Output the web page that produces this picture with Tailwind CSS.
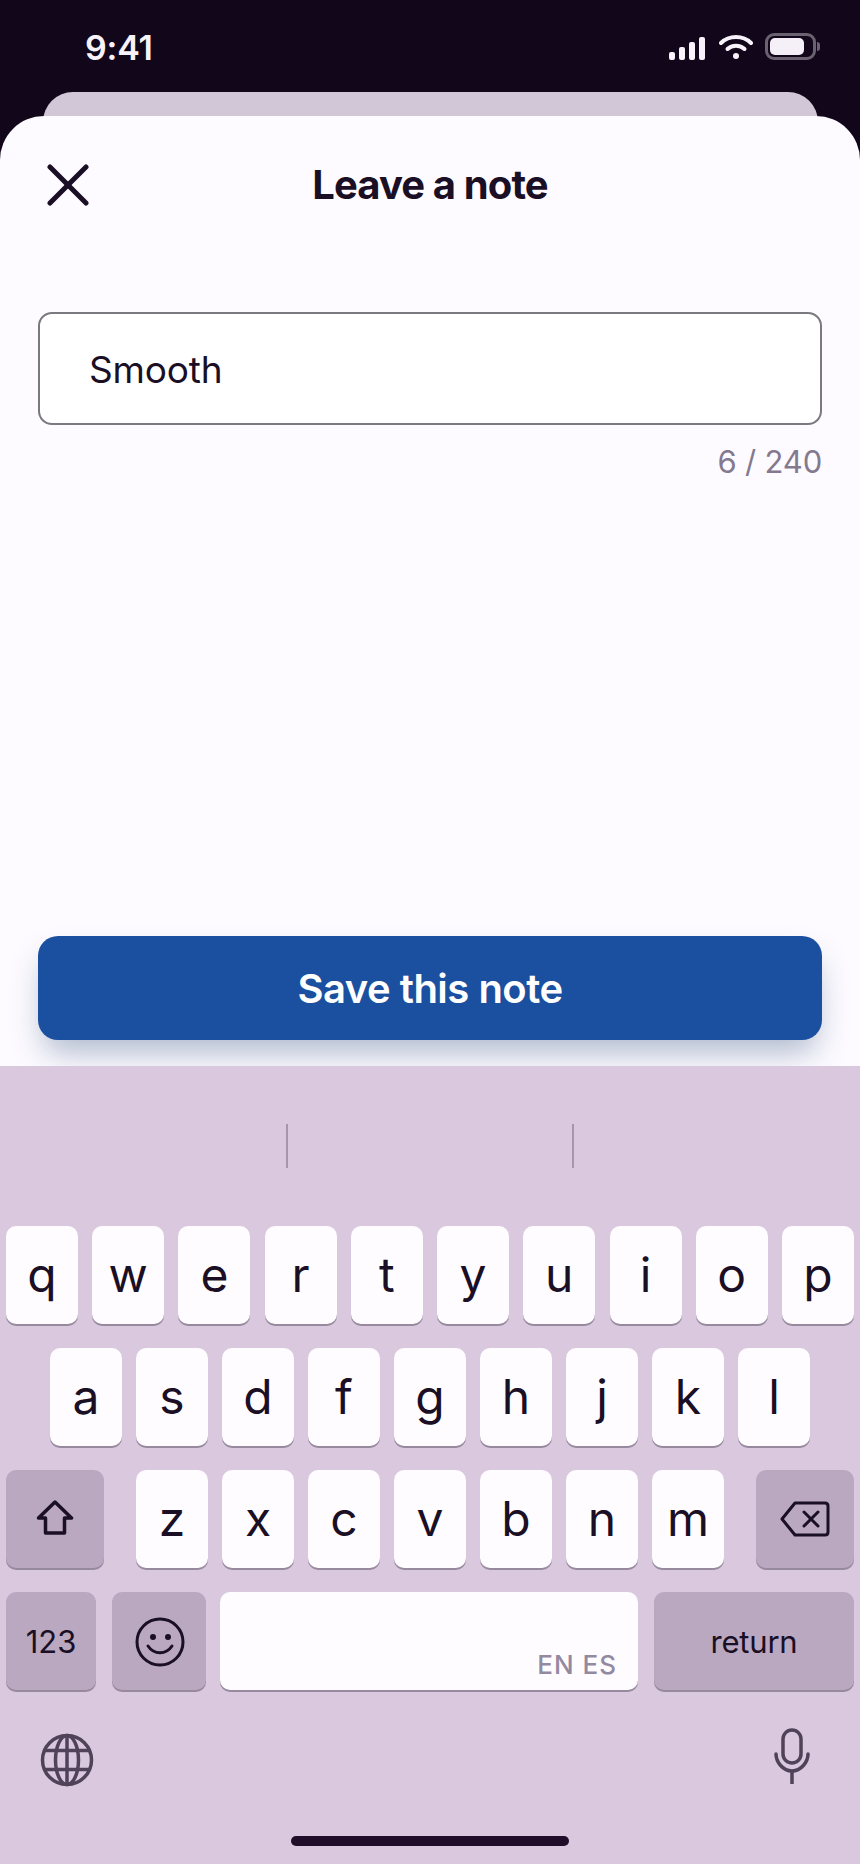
<!DOCTYPE html>
<html lang="en">
<head>
    <meta charset="UTF-8">
    <meta name="viewport" content="width=device-width, initial-scale=1.0">
    <title>Leave a note</title>
    <script src="https://cdn.jsdelivr.net/npm/@tailwindcss/browser@4"></script>
</head>
<body class="bg-[#12061a]">

<div class="w-[860px] h-[1864px] flex flex-col overflow-hidden bg-[#12061a] font-['Inter',sans-serif] text-[#1a0f24]">

    <!-- status bar -->
    <div class="h-[92px] flex items-start justify-between pl-[85px] pr-[40px] pt-[28px]">
        <span class="text-[34px] leading-[40px] font-semibold text-[#f8f3fb] tracking-[-0.2px]">9:41</span>
        <div class="flex items-center mt-[5px]">
            <svg class="mt-[3px]" width="36" height="24" viewBox="0 0 36 24" fill="#f8f3fb">
                <rect x="0" y="16" width="6" height="8" rx="2"/>
                <rect x="10" y="11" width="6" height="13" rx="2"/>
                <rect x="20" y="6" width="6" height="18" rx="2"/>
                <rect x="30" y="1" width="6" height="23" rx="2"/>
            </svg>
            <svg class="ml-[14px] mt-[1px]" width="34" height="26" viewBox="0 0 34 26" fill="none" stroke="#f8f3fb" stroke-width="4" stroke-linecap="round">
                <path d="M2 9C10 1 24 1 32 9"/>
                <path d="M8.500 15C13 10.500 21 10.500 25.500 15"/>
                <circle cx="17" cy="22" r="3" fill="#f8f3fb" stroke="none"/>
            </svg>
            <div class="flex items-center gap-[1px] ml-[12px]">
                <div class="w-[51px] h-[27px] rounded-[9px] border-[3px] border-[#6a6270] p-[2px]">
                    <div class="w-[34px] h-full rounded-[5px] bg-[#f5f0f8]"></div>
                </div>
                <div class="w-[3px] h-[9px] rounded-r-full bg-[#6a6270]"></div>
            </div>
        </div>
    </div>

    <!-- card peeking from behind the sheet -->
    <div class="h-[44px] -mb-[20px] ml-[43px] mr-[42px] rounded-t-[30px] bg-[#d2c7d6]"></div>

    <!-- sheet -->
    <div class="relative h-[950px] rounded-t-[44px] bg-[#fdfbff] px-[38px] flex flex-col">
        <div class="h-[196px] relative flex justify-center">
            <svg class="absolute left-[9px] top-[48px]" width="42" height="42" viewBox="0 0 42 42" fill="none" stroke="#1a0f24" stroke-width="5" stroke-linecap="round">
                <path d="M3 3L39 39"/>
                <path d="M39 3L3 39"/>
            </svg>
            <h1 class="text-[40px] leading-[48px] mt-[45px] h-fit font-bold tracking-[-0.9px]">Leave a note</h1>
        </div>
        <div class="h-[113px] rounded-[14px] border-2 border-[#7b7880] bg-white flex items-center pl-[49px]">
            <span class="text-[37px] leading-[44px] mt-[2px] tracking-[-0.2px]">Smooth</span>
        </div>
        <div class="mt-[18px] text-right text-[31px] leading-[38px] text-[#84798f] tracking-[-0.2px]">6 / 240</div>
        <div class="mt-auto mb-[26px] h-[104px] pt-[2px] rounded-[20px] bg-[#1b4f9f] shadow-[0_18px_32px_-6px_rgba(27,60,110,0.35)] flex items-center justify-center">
            <span class="text-[40px] leading-[48px] font-semibold text-white tracking-[-0.5px]">Save this note</span>
        </div>
    </div>

    <!-- keyboard -->
    <div class="relative flex-1 bg-[#d9c8de]">
        <!-- suggestion strip -->
        <div class="h-[160px] flex pt-[58px] pl-[286px]">
            <div class="w-[2px] h-[44px] bg-[#a894ae]"></div>
            <div class="w-[2px] h-[44px] bg-[#a894ae] ml-[284px]"></div>
        </div>

        <div class="flex flex-col gap-[24px]">
            <div class="flex justify-between px-[6px]">
                <div class="w-[72px] h-[98px] rounded-[10px] bg-[#fefcff] shadow-[0_2px_0_#978a9f] flex items-center justify-center text-[48px]">q</div>
                <div class="w-[72px] h-[98px] rounded-[10px] bg-[#fefcff] shadow-[0_2px_0_#978a9f] flex items-center justify-center text-[48px]">w</div>
                <div class="w-[72px] h-[98px] rounded-[10px] bg-[#fefcff] shadow-[0_2px_0_#978a9f] flex items-center justify-center text-[48px]">e</div>
                <div class="w-[72px] h-[98px] rounded-[10px] bg-[#fefcff] shadow-[0_2px_0_#978a9f] flex items-center justify-center text-[48px]">r</div>
                <div class="w-[72px] h-[98px] rounded-[10px] bg-[#fefcff] shadow-[0_2px_0_#978a9f] flex items-center justify-center text-[48px]">t</div>
                <div class="w-[72px] h-[98px] rounded-[10px] bg-[#fefcff] shadow-[0_2px_0_#978a9f] flex items-center justify-center text-[48px]">y</div>
                <div class="w-[72px] h-[98px] rounded-[10px] bg-[#fefcff] shadow-[0_2px_0_#978a9f] flex items-center justify-center text-[48px]">u</div>
                <div class="w-[72px] h-[98px] rounded-[10px] bg-[#fefcff] shadow-[0_2px_0_#978a9f] flex items-center justify-center text-[48px]">i</div>
                <div class="w-[72px] h-[98px] rounded-[10px] bg-[#fefcff] shadow-[0_2px_0_#978a9f] flex items-center justify-center text-[48px]">o</div>
                <div class="w-[72px] h-[98px] rounded-[10px] bg-[#fefcff] shadow-[0_2px_0_#978a9f] flex items-center justify-center text-[48px]">p</div>
            </div>

            <div class="flex justify-between px-[50px]">
                <div class="w-[72px] h-[98px] rounded-[10px] bg-[#fefcff] shadow-[0_2px_0_#978a9f] flex items-center justify-center text-[48px]">a</div>
                <div class="w-[72px] h-[98px] rounded-[10px] bg-[#fefcff] shadow-[0_2px_0_#978a9f] flex items-center justify-center text-[48px]">s</div>
                <div class="w-[72px] h-[98px] rounded-[10px] bg-[#fefcff] shadow-[0_2px_0_#978a9f] flex items-center justify-center text-[48px]">d</div>
                <div class="w-[72px] h-[98px] rounded-[10px] bg-[#fefcff] shadow-[0_2px_0_#978a9f] flex items-center justify-center text-[48px]">f</div>
                <div class="w-[72px] h-[98px] rounded-[10px] bg-[#fefcff] shadow-[0_2px_0_#978a9f] flex items-center justify-center text-[48px]">g</div>
                <div class="w-[72px] h-[98px] rounded-[10px] bg-[#fefcff] shadow-[0_2px_0_#978a9f] flex items-center justify-center text-[48px]">h</div>
                <div class="w-[72px] h-[98px] rounded-[10px] bg-[#fefcff] shadow-[0_2px_0_#978a9f] flex items-center justify-center text-[48px]">j</div>
                <div class="w-[72px] h-[98px] rounded-[10px] bg-[#fefcff] shadow-[0_2px_0_#978a9f] flex items-center justify-center text-[48px]">k</div>
                <div class="w-[72px] h-[98px] rounded-[10px] bg-[#fefcff] shadow-[0_2px_0_#978a9f] flex items-center justify-center text-[48px]">l</div>
            </div>

            <div class="flex justify-between px-[6px]">
                <div class="w-[98px] h-[98px] pb-[2px] rounded-[10px] bg-[#b9a8bf] shadow-[0_2px_0_#978a9f] flex items-center justify-center">
                    <svg width="40" height="36" viewBox="0 0 40 36" fill="none" stroke="#1a0f24" stroke-width="3.500" stroke-linejoin="round">
                        <path d="M20 2L36.500 18H29.500V33H10.500V18H3.500Z"/>
                    </svg>
                </div>
                <div class="flex gap-[14px]">
                    <div class="w-[72px] h-[98px] rounded-[10px] bg-[#fefcff] shadow-[0_2px_0_#978a9f] flex items-center justify-center text-[48px]">z</div>
                    <div class="w-[72px] h-[98px] rounded-[10px] bg-[#fefcff] shadow-[0_2px_0_#978a9f] flex items-center justify-center text-[48px]">x</div>
                    <div class="w-[72px] h-[98px] rounded-[10px] bg-[#fefcff] shadow-[0_2px_0_#978a9f] flex items-center justify-center text-[48px]">c</div>
                    <div class="w-[72px] h-[98px] rounded-[10px] bg-[#fefcff] shadow-[0_2px_0_#978a9f] flex items-center justify-center text-[48px]">v</div>
                    <div class="w-[72px] h-[98px] rounded-[10px] bg-[#fefcff] shadow-[0_2px_0_#978a9f] flex items-center justify-center text-[48px]">b</div>
                    <div class="w-[72px] h-[98px] rounded-[10px] bg-[#fefcff] shadow-[0_2px_0_#978a9f] flex items-center justify-center text-[48px]">n</div>
                    <div class="w-[72px] h-[98px] rounded-[10px] bg-[#fefcff] shadow-[0_2px_0_#978a9f] flex items-center justify-center text-[48px]">m</div>
                </div>
                <div class="w-[98px] h-[98px] rounded-[10px] bg-[#b9a8bf] shadow-[0_2px_0_#978a9f] flex items-center justify-center">
                    <svg width="50" height="36" viewBox="0 0 50 36" fill="none" stroke="#1a0f24" stroke-width="3" stroke-linejoin="round" stroke-linecap="round">
                        <path d="M15 2H45C47 2 48 3 48 5V31C48 33 47 34 45 34H15L2 18Z"/>
                        <path d="M24 11L38 25"/>
                        <path d="M38 11L24 25"/>
                    </svg>
                </div>
            </div>

            <div class="flex px-[6px]">
                <div class="w-[90px] h-[98px] pt-[3px] rounded-[10px] bg-[#b9a8bf] shadow-[0_2px_0_#978a9f] flex items-center justify-center text-[31px]">123</div>
                <div class="w-[94px] h-[98px] ml-[16px] pl-[2px] pt-[2px] rounded-[10px] bg-[#b9a8bf] shadow-[0_2px_0_#978a9f] flex items-center justify-center">
                    <svg width="50" height="50" viewBox="0 0 50 50" fill="none" stroke="#1a0f24" stroke-width="3" stroke-linecap="round">
                        <circle cx="25" cy="25" r="23"/>
                        <path d="M13 29C19 38 31 38 37 29"/>
                        <circle cx="18" cy="20" r="3" fill="#1a0f24" stroke="none"/>
                        <circle cx="33" cy="20" r="3" fill="#1a0f24" stroke="none"/>
                    </svg>
                </div>
                <div class="w-[418px] h-[98px] ml-[14px] rounded-[10px] bg-[#fefcff] shadow-[0_2px_0_#978a9f] flex items-end justify-end pr-[21px] pb-[9px]">
                    <span class="text-[26px] leading-[32px] font-medium tracking-[1px] text-[#948a9f]">EN ES</span>
                </div>
                <div class="w-[200px] h-[98px] ml-[16px] pt-[3px] rounded-[10px] bg-[#b9a8bf] shadow-[0_2px_0_#978a9f] flex items-center justify-center text-[31px] tracking-[-0.2px]">return</div>
            </div>
        </div>

        <!-- globe and mic -->
        <div class="flex justify-between items-start pl-[40px] pr-[50px] pt-[38px]">
            <svg class="mt-[5px]" width="54" height="54" viewBox="0 0 54 54" fill="none" stroke="#4f4259" stroke-width="3.500">
                <circle cx="27" cy="27" r="24.500"/>
                <ellipse cx="27" cy="27" rx="11.500" ry="24.500"/>
                <path d="M27 3V51"/>
                <path d="M5 17.500H49"/>
                <path d="M5 36.500H49"/>
            </svg>
            <svg width="36" height="58" viewBox="0 0 36 58" fill="none" stroke="#4f4259" stroke-width="3.500" stroke-linecap="round">
                <rect x="9" y="2" width="18" height="33" rx="9"/>
                <path d="M2 26C2 34 9 43 18 43C27 43 34 34 34 26"/>
                <path d="M18 43V56" stroke-linecap="butt"/>
            </svg>
        </div>

        <!-- home indicator -->
        <div class="absolute left-[291px] bottom-[18px] w-[278px] h-[10px] rounded-full bg-[#1f0d2a]"></div>
    </div>
</div>

</body>
</html>
